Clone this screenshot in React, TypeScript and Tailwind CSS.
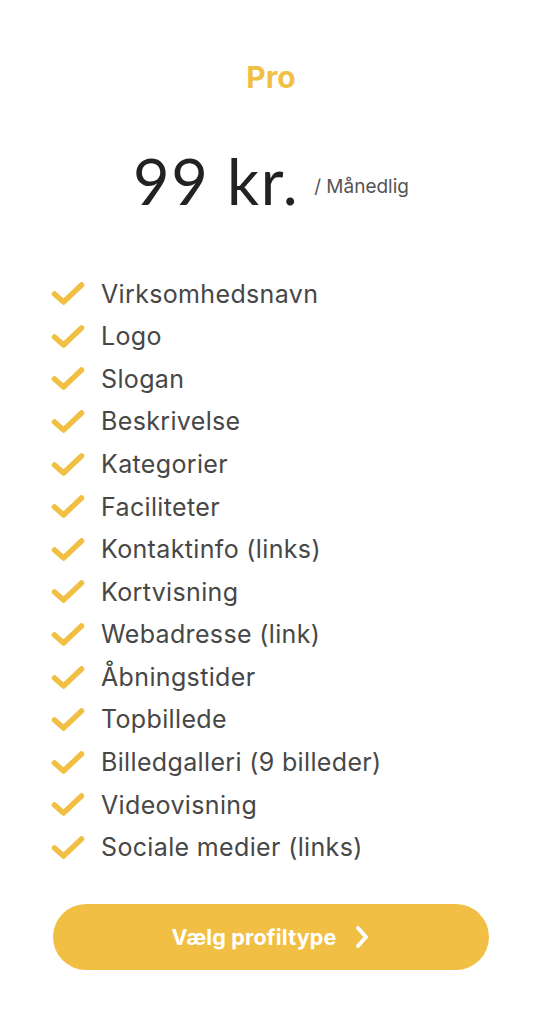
import React from "react";

const items = [
  "Virksomhedsnavn",
  "Logo",
  "Slogan",
  "Beskrivelse",
  "Kategorier",
  "Faciliteter",
  "Kontaktinfo (links)",
  "Kortvisning",
  "Webadresse (link)",
  "Åbningstider",
  "Topbillede",
  "Billedgalleri (9 billeder)",
  "Videovisning",
  "Sociale medier (links)",
];

function Check() {
  return (
    <svg width="36" height="28" viewBox="0 0 36 28" className="shrink-0">
      <path d="M4.5 14 L13.5 22 L31.5 5" fill="none" stroke="#f2bf45" strokeWidth="5.5" strokeLinecap="round" strokeLinejoin="round" />
    </svg>
  );
}

export default function App() {
  return (
    <div className="w-[542px] h-[1024px] bg-white flex flex-col items-center" style={{ fontFamily: "Inter, 'Noto Sans', sans-serif" }}>
      <div className="mt-[58px] text-[30px] leading-[38px] font-bold text-[#f2bf45]">Pro</div>
      <div className="mt-[46px] flex items-center">
        <span className="text-[63px] leading-[78px] font-normal text-[#222] tracking-[1.6px]" style={{ fontFamily: "Lato, Inter, sans-serif" }}>99 kr.</span>
        <span className="ml-[15px] text-[19px] text-[#555] mt-[12px]">/ Månedlig</span>
      </div>
      <ul className="self-start ml-[50px] mt-[53px] flex flex-col">
        {items.map((t) => (
          <li key={t} className="flex items-center h-[42.6px]">
            <Check />
            <span className="ml-[15px] text-[25px] tracking-[0.35px] text-[#474747]">{t}</span>
          </li>
        ))}
      </ul>
      <button className="mt-[35px] w-[436px] h-[66px] rounded-full bg-[#f2bf45] flex items-center justify-center text-white text-[21.5px] font-bold tracking-[0.2px]">
        <span>Vælg profiltype</span>
        <svg width="18" height="26" viewBox="0 0 18 26" className="ml-[16px]">
          <path d="M5 4 L13 13 L5 22" fill="none" stroke="white" strokeWidth="4" strokeLinecap="round" strokeLinejoin="round" />
        </svg>
      </button>
    </div>
  );
}
